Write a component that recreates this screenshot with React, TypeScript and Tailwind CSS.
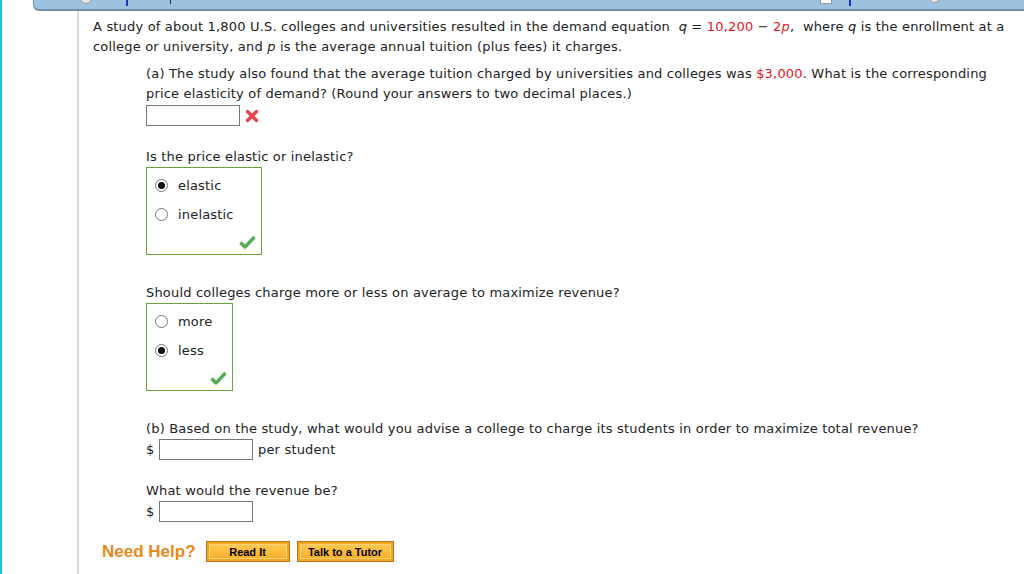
import React from 'react';

const font = { fontFamily: '"DejaVu Sans", Verdana, sans-serif' };

const Radio: React.FC<{ checked?: boolean }> = ({ checked }) => (
    <span className="inline-flex h-[13px] w-[13px] items-center justify-center rounded-full border border-[#767676] bg-white">
        {checked && <span className="h-[7px] w-[7px] rounded-full bg-[#111]" />}
    </span>
);

const Check: React.FC = () => (
    <svg width="17" height="14" viewBox="0 0 17 14">
        <path d="M1.5 7.5 L6 12 L15.5 2" fill="none" stroke="#56ad56" strokeWidth="3.4" strokeLinejoin="round" />
    </svg>
);

const Cross: React.FC = () => (
    <svg width="14" height="14" viewBox="0 0 14 14">
        <path d="M2.5 2.5 L11.5 11.5 M11.5 2.5 L2.5 11.5" stroke="#e8464b" strokeWidth="3.4" strokeLinecap="round" />
    </svg>
);

const TextBox: React.FC = () => (
    <span className="inline-block h-[21px] w-[94px] border border-[#767676] bg-white" />
);

const ChoiceBox: React.FC<{ options: { label: string; checked?: boolean }[]; width: string }> = ({ options, width }) => (
    <div className={`flex h-[88px] flex-col border border-[#6aa33b] ${width}`}>
        <div className="flex flex-col pt-[3px]">
            {options.map((o) => (
                <div key={o.label} className="flex h-[29px] items-center gap-[10px] pl-[8px]">
                    <Radio checked={o.checked} />
                    <span>{o.label}</span>
                </div>
            ))}
        </div>
        <div className="mt-auto flex justify-end pb-[5px] pr-[5px]">
            <Check />
        </div>
    </div>
);

const OrangeButton: React.FC<{ label: string; w: string }> = ({ label, w }) => (
    <button
        className={`h-[21px] ${w} border border-[#b8741c] bg-[#f5a623] p-[2px] tracking-normal`}
        style={{ fontFamily: '"Liberation Sans", Arial, sans-serif' }}
    >
        <span className="flex h-full w-full items-center justify-center border border-[#ffd27a] bg-gradient-to-b from-[#ffc94d] to-[#f8ae2c] text-[11px] font-bold text-black">
            {label}
        </span>
    </button>
);

const App: React.FC = () => {
    return (
        <div className="flex h-[574px] w-full flex-col overflow-hidden border-l-2 border-[#19c1d1] bg-white text-[13px] leading-[20px] tracking-[0.18px] text-[#222]" style={font}>
            {/* top toolbar, mostly cut off */}
            <div className="relative ml-[31px] h-[11px] shrink-0 rounded-bl-[6px] border-b-2 border-l border-[#6f8fa8] bg-[#9cc2df]">
                <span className="absolute left-[46px] top-[-8px] h-[12px] w-[12px] rounded-full border border-[#999] bg-[#e6e6e6]" />
                <span className="absolute left-[92px] top-0 h-[6px] w-[2px] bg-[#1630c8]" />
                <span className="absolute left-[136px] top-0 h-[4px] w-[1px] bg-[#333]" />
                <span className="absolute left-[786px] top-[-6px] h-[10px] w-[12px] border border-[#999] bg-white" />
                <span className="absolute left-[815px] top-0 h-[6px] w-[2px] bg-[#1630c8]" />
                <span className="absolute left-[895px] top-[-8px] h-[11px] w-[11px] rounded-full border border-[#999] bg-[#e6e6e6]" />
            </div>

            <div className="ml-[75px] flex flex-1 flex-col border-l-2 border-[#dadada] pl-[14px] pt-[6px]">
                <p className="w-[925px]">
                    A study of about 1,800 U.S. colleges and universities resulted in the demand equation&nbsp;{' '}
                    <i>q</i> = <span className="text-[#e8121f]">10,200</span> − <span className="text-[#e8121f]">2<i>p</i></span>,&nbsp;{' '}
                    where <i>q</i> is the enrollment at a college or university, and <i>p</i> is the average annual tuition (plus fees) it charges.
                </p>

                <div className="ml-[53px] mt-[7px] flex flex-col">
                    <p className="w-[860px]">
                        (a) The study also found that the average tuition charged by universities and colleges was{' '}
                        <span className="text-[#e8121f]">$3,000</span>. What is the corresponding price elasticity of demand? (Round your
                        answers to two decimal places.)
                    </p>
                    <div className="mt-[1px] flex items-center gap-[5px]">
                        <TextBox />
                        <Cross />
                    </div>

                    <p className="mt-[21px]">Is the price elastic or inelastic?</p>
                    <ChoiceBox width="w-[116px]" options={[{ label: 'elastic', checked: true }, { label: 'inelastic' }]} />

                    <p className="mt-[28px]">Should colleges charge more or less on average to maximize revenue?</p>
                    <ChoiceBox width="w-[87px]" options={[{ label: 'more' }, { label: 'less', checked: true }]} />

                    <p className="mt-[28px]">
                        (b) Based on the study, what would you advise a college to charge its students in order to maximize total revenue?
                    </p>
                    <div className="flex h-[21px] items-center">
                        <span className="w-[13px]">$</span>
                        <TextBox />
                        <span className="ml-[5px]">per student</span>
                    </div>

                    <p className="mt-[21px]">What would the revenue be?</p>
                    <div className="flex h-[21px] items-center">
                        <span className="w-[13px]">$</span>
                        <TextBox />
                    </div>
                </div>

                <div className="ml-[9px] mt-[19px] flex items-center">
                    <span className="mr-[10px] text-[17px] font-bold tracking-normal text-[#e8891a]" style={{ fontFamily: '"Liberation Sans", Arial, sans-serif' }}>
                        Need Help?
                    </span>
                    <OrangeButton label="Read It" w="w-[84px]" />
                    <span className="w-[7px]" />
                    <OrangeButton label="Talk to a Tutor" w="w-[97px]" />
                </div>
            </div>
        </div>
    );
};

export default App;
